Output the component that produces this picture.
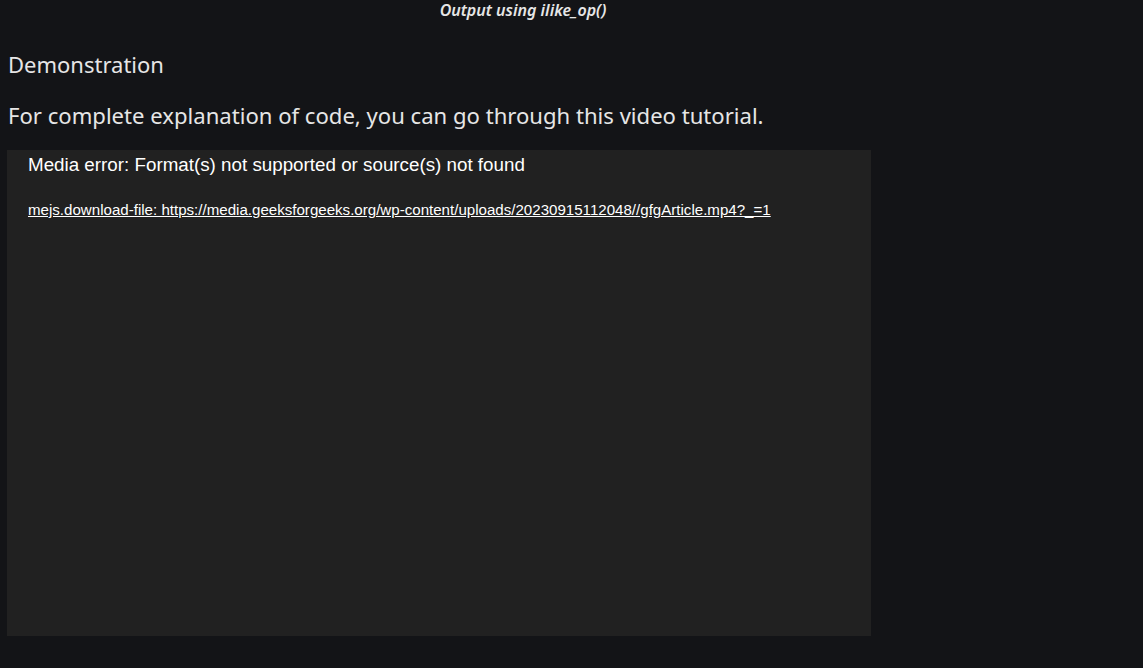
export default function App() {
  return (
    <div className="min-h-[668px] bg-[#131417] text-[#e6e6e6] font-['Noto_Sans',sans-serif] overflow-hidden">
      <div className="w-[1046px] text-center">
        <span className="block italic font-semibold text-[16px] leading-[20px]">Output using ilike_op()</span>
      </div>
      <div className="px-[8px]">
        <h3 className="text-[22px] leading-[30px] mt-[29px] font-normal">Demonstration</h3>
        <p className="text-[22.1px] leading-[30px] mt-[21px]">For complete explanation of code, you can go through this video tutorial.</p>
      </div>
      <div className="ml-[7px] mt-[20px] w-[864px] h-[486px] bg-[#212121] px-[21px] pt-[4px] font-['Liberation_Sans',Arial,sans-serif] text-white">
        <p className="text-[18.8px] leading-[22px]">Media error: Format(s) not supported or source(s) not found</p>
        <a href="#" className="inline-block mt-[25px] text-[15.1px] leading-[18px] underline text-white">
          mejs.download-file: https://media.geeksforgeeks.org/wp-content/uploads/20230915112048//gfgArticle.mp4?_=1
        </a>
      </div>
    </div>
  )
}
